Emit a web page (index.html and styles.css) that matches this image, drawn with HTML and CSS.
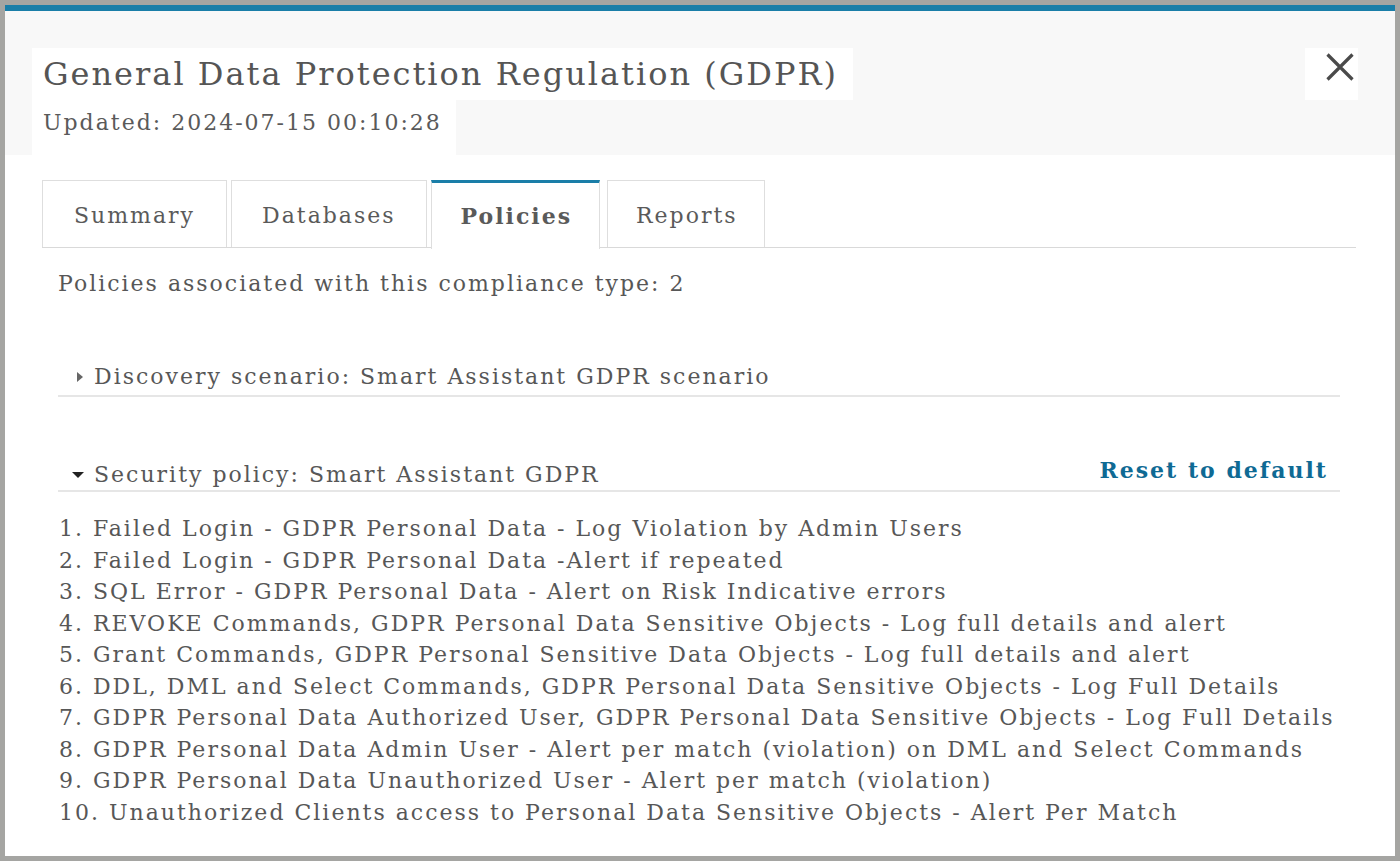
FILE: index.html
```html
<!DOCTYPE html>
<html>
<head>
<meta charset="utf-8">
<link rel="stylesheet" href="styles.css">
</head>
<body>
<div class="modal">
  <div class="header">
    <div class="titles">
      <div class="title">General Data Protection Regulation (GDPR)</div>
      <div class="updated">Updated: 2024-07-15 00:10:28</div>
    </div>
    <div class="close" aria-label="Close">
      <svg width="28" height="28" viewBox="0 0 28 28"><path d="M1.5 1.5 L26.5 26.5 M26.5 1.5 L1.5 26.5" stroke="#4a4a4a" stroke-width="3.2" fill="none"/></svg>
    </div>
  </div>
  <div class="content">
    <div class="tabs">
      <div class="tab t1">Summary</div>
      <div class="tab t2">Databases</div>
      <div class="tab t3 active">Policies</div>
      <div class="tab t4">Reports</div>
    </div>
    <div class="panel">
      <div class="count">Policies associated with this compliance type: 2</div>
      <div class="section collapsed">
        <span class="caret right"></span><span>Discovery scenario: Smart Assistant GDPR scenario</span>
      </div>
      <div class="section open">
        <span class="caret down"></span><span>Security policy: Smart Assistant GDPR</span>
        <span class="reset">Reset to default</span>
      </div>
      <ol class="rules">
        <li>1. Failed Login - GDPR Personal Data - Log Violation by Admin Users</li>
        <li>2. Failed Login - GDPR Personal Data -Alert if repeated</li>
        <li>3. SQL Error - GDPR Personal Data - Alert on Risk Indicative errors</li>
        <li>4. REVOKE Commands, GDPR Personal Data Sensitive Objects - Log full details and alert</li>
        <li>5. Grant Commands, GDPR Personal Sensitive Data Objects - Log full details and alert</li>
        <li>6. DDL, DML and Select Commands, GDPR Personal Data Sensitive Objects - Log Full Details</li>
        <li>7. GDPR Personal Data Authorized User, GDPR Personal Data Sensitive Objects - Log Full Details</li>
        <li>8. GDPR Personal Data Admin User - Alert per match (violation) on DML and Select Commands</li>
        <li>9. GDPR Personal Data Unauthorized User - Alert per match (violation)</li>
        <li>10. Unauthorized Clients access to Personal Data Sensitive Objects - Alert Per Match</li>
      </ol>
    </div>
  </div>
</div>
</body>
</html>
```
FILE: styles.css
```css
html, body {
  margin: 0;
  padding: 0;
  background: #a5a5a2;
  height: 861px;
  overflow: hidden;
}
body {
  padding: 5px;
  box-sizing: border-box;
  font-family: "DejaVu Serif", serif;
  color: #575757;
  letter-spacing: 2px;
}
.modal {
  width: 1390px;
  height: 851px;
  background: #fff;
  border-top: 6px solid #1a7ea8;
  box-sizing: border-box;
  display: flex;
  flex-direction: column;
}
.header {
  background: #f8f8f8;
  height: 144px;
  display: flex;
  justify-content: space-between;
  align-items: flex-start;
  padding: 37px 37px 0 27px;
  box-sizing: border-box;
}
.titles {
  display: flex;
  flex-direction: column;
  align-items: flex-start;
}
.title {
  background: #fff;
  font-size: 32px;
  line-height: 52px;
  padding: 0 15px 0 11px;
  color: #555;
}
.updated {
  background: #fff;
  font-size: 22px;
  line-height: 30px;
  padding: 8px 14px 17px 11px;
  color: #5a5a5a;
}
.close {
  background: #fff;
  width: 53px;
  height: 52px;
  padding: 5px 0 0 21px;
  box-sizing: border-box;
}
.close svg { display: block; }
.content {
  padding: 25px 39px 0 37px;
}
.tabs {
  display: flex;
  gap: 4px;
  border-bottom: 1px solid #d9d9d9;
  height: 68px;
  box-sizing: border-box;
}
.tab {
  border: 1px solid #dedede;
  border-bottom: none;
  font-size: 22px;
  color: #5a5a5a;
  height: 67px;
  box-sizing: border-box;
  display: flex;
  align-items: center;
  padding-top: 2px;
}
.t1 { padding-left: 31px; padding-right: 31px; }
.t2 { padding-left: 30px; padding-right: 30px; }
.t4 { padding-left: 28px; padding-right: 26px; }
.tab.active {
  font-weight: bold;
  border-top: 3px solid #1a7ea8;
  height: 69px;
  background: #fff;
  padding: 0 27px 0 29px;
  margin-right: 3px;
}
.panel {
  padding: 0 16px;
}
.count {
  font-size: 22px;
  line-height: 31px;
  margin-top: 20px;
}
.section {
  font-size: 22px;
  line-height: 30px;
  display: flex;
  align-items: center;
  border-bottom: 2px solid #e6e6e6;
  padding-bottom: 3px;
}
.section.collapsed { margin-top: 63px; padding-left: 19px; }
.section.open { margin-top: 63px; padding-left: 14px; padding-bottom: 0; }
.caret {
  display: inline-block;
  width: 0;
  height: 0;
}
.caret.right {
  border-top: 5px solid transparent;
  border-bottom: 5px solid transparent;
  border-left: 6px solid #666;
  margin-right: 11px;
}
.caret.down {
  border-left: 6px solid transparent;
  border-right: 6px solid transparent;
  border-top: 6px solid #222;
  margin-right: 10px;
}
.reset {
  margin-left: auto;
  margin-right: 12px;
  font-weight: bold;
  color: #0f6a94;
  margin-top: -10px;
}
.rules {
  list-style: none;
  margin: 21px 0 0 0;
  padding: 0 0 0 1px;
  font-size: 22px;
  line-height: 31.5px;
}
```
